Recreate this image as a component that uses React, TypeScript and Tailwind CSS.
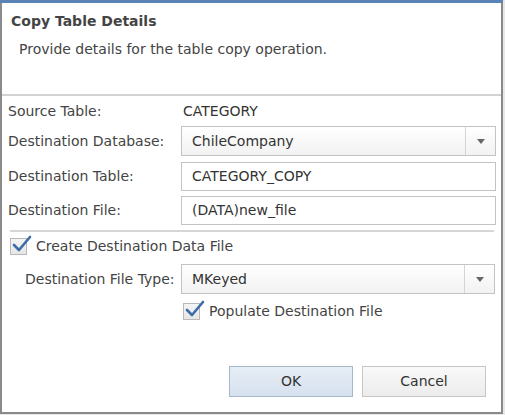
import React from 'react';

const font = { fontFamily: '"DejaVu Sans", Verdana, sans-serif' };

function Check() {
  return (
    <span className="relative inline-block w-[17px] h-[17px] border border-[#b9b9b9] bg-gradient-to-b from-[#f4f4f4] to-[#e6e6e6] shrink-0">
      <svg className="absolute left-[1px] -top-[4px]" width="20" height="18" viewBox="0 0 20 18">
        <path d="M2 10 L7 15 L18 2" fill="none" stroke="#3d6ca8" strokeWidth="2.6" strokeLinecap="round" strokeLinejoin="round" />
      </svg>
    </span>
  );
}

function Select({ value }: { value: string }) {
  return (
    <div className="flex h-[30px] flex-1 border border-[#c3c3c3] bg-gradient-to-b from-white to-[#f2f2f2]">
      <div className="flex flex-1 items-center pl-[10px] text-[#333]">{value}</div>
      <div className="flex w-[30px] items-center justify-center border-l border-[#d4d4d4]">
        <svg width="8" height="5" viewBox="0 0 8 5">
          <path d="M0 0 H8 L4 5 Z" fill="#666" />
        </svg>
      </div>
    </div>
  );
}

function Input({ value }: { value: string }) {
  return (
    <div className="flex h-[29px] flex-1 items-center border border-[#c3c3c3] bg-white pl-[10px] text-[#333]">
      {value}
    </div>
  );
}

export default function App() {
  return (
    <div className="w-[505px] h-[415px] bg-[#e8e8e8] text-[14px] text-[#444]" style={font}>
      <div className="flex h-[414px] w-[503px] flex-col border-x-2 border-b-2 border-[#8a8a8a] bg-white">
        <div className="h-[3px] bg-[#5a84b8] -mx-[2px]" />
        <div className="h-[93px] border-b-2 border-[#d2d2d2] pl-[9px] pt-[8px]">
          <div className="font-bold text-[#444]">Copy Table Details</div>
          <div className="mt-[7px] pl-[8px]">Provide details for the table copy operation.</div>
        </div>
        <div className="flex flex-col px-[6px] pr-[5px]">
          <div className="flex h-[30px] items-center">
            <div className="w-[174px]">Source Table:</div>
            <div className="pl-[1px] text-[#333]">CATEGORY</div>
          </div>
          <div className="flex items-center">
            <div className="w-[173px]">Destination Database:</div>
            <Select value="ChileCompany" />
          </div>
          <div className="mt-[6px] flex items-center">
            <div className="w-[173px]">Destination Table:</div>
            <Input value="CATEGORY_COPY" />
          </div>
          <div className="mt-[5px] flex items-center">
            <div className="w-[173px]">Destination File:</div>
            <Input value="(DATA)new_file" />
          </div>
          <div className="mt-[5px] mx-[2px] h-[2px] bg-[#d6d6d6]" />
          <div className="mt-[4px] flex items-center gap-[9px] pl-[2px]">
            <Check />
            <span>Create Destination Data File</span>
          </div>
          <div className="mt-[7px] flex items-center pr-[1px]">
            <div className="w-[173px] pl-[17px]">Destination File Type:</div>
            <Select value="MKeyed" />
          </div>
          <div className="mt-[7px] flex items-center gap-[9px] pl-[175px]">
            <Check />
            <span>Populate Destination File</span>
          </div>
        </div>
        <div className="mt-auto mb-[15px] flex justify-end gap-[9px] pr-[15px]">
          <button className="h-[31px] w-[124px] border border-[#a6b8cc] bg-gradient-to-b from-[#e6edf5] to-[#d6e1ee] text-[#333]">OK</button>
          <button className="h-[31px] w-[124px] border border-[#c6c6c6] bg-gradient-to-b from-[#f9f9f9] to-[#ececec] text-[#333]">Cancel</button>
        </div>
      </div>
    </div>
  );
}
